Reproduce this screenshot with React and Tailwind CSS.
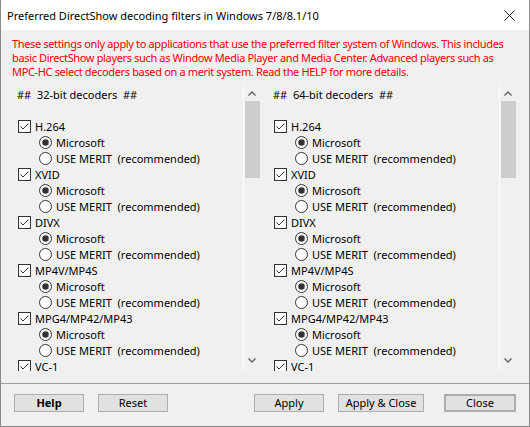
const decoders = ['H.264', 'XVID', 'DIVX', 'MP4V/MP4S', 'MPG4/MP42/MP43', 'VC-1']

const font = { fontFamily: '"Noto Sans", "Open Sans", sans-serif' }

function CheckBox() {
  return (
    <svg width="13" height="13" viewBox="0 0 13 13" className="shrink-0">
      <rect x="0.5" y="0.5" width="12" height="12" fill="#fff" stroke="#333" />
      <path d="M2.5 6.5 L5 9 L10.5 3.5" fill="none" stroke="#333" strokeWidth="1" />
    </svg>
  )
}

function Radio({ checked }) {
  return (
    <svg width="13" height="13" viewBox="0 0 13 13" className="shrink-0">
      <circle cx="6.5" cy="6.5" r="6" fill="#fff" stroke="#333" />
      {checked && <circle cx="6.5" cy="6.5" r="3.2" fill="#333" />}
    </svg>
  )
}

function Chevron({ down }) {
  return (
    <svg width="8" height="5" viewBox="0 0 8 5">
      <path
        d={down ? 'M0.5 0.5 L4 4 L7.5 0.5' : 'M0.5 4.5 L4 1 L7.5 4.5'}
        fill="none"
        stroke="#606060"
        strokeWidth="1.3"
      />
    </svg>
  )
}

function Scrollbar() {
  return (
    <div className="w-[17px] h-full border-l border-white flex flex-col items-center">
      <div className="h-[17px] flex items-center justify-center pt-[2px]">
        <Chevron />
      </div>
      <div className="w-[15px] h-[77px] bg-[#cdcdcd]" />
      <div className="flex-1" />
      <div className="h-[17px] flex items-center justify-center pb-[4px]">
        <Chevron down />
      </div>
    </div>
  )
}

function Panel({ bits }) {
  return (
    <div className="flex h-[287px]">
      <div className="w-[234px] overflow-hidden pt-[2px] pl-[8px] whitespace-nowrap">
        <div className="h-[16px] flex items-center">## &nbsp;{bits}-bit decoders &nbsp;##</div>
        <div className="h-[16px]" />
        {decoders.map((d, i) => (
          <div key={d}>
            <div className="h-[16px] flex items-center gap-[4px] pl-[1px]">
              <CheckBox />
              <span>{d}</span>
            </div>
            {i < decoders.length - 1 && (
              <>
                <div className="h-[16px] flex items-center gap-[4px] pl-[22px]">
                  <Radio checked />
                  <span>Microsoft</span>
                </div>
                <div className="h-[16px] flex items-center gap-[4px] pl-[22px]">
                  <Radio />
                  <span>USE MERIT &nbsp;(recommended)</span>
                </div>
              </>
            )}
          </div>
        ))}
      </div>
      <Scrollbar />
    </div>
  )
}

function Button({ children, className = '' }) {
  return (
    <button
      className={`h-[18px] p-0 bg-[#e1e1e1] border border-[#adadad] flex items-center justify-center text-black leading-[14px] ${className}`}
    >
      {children}
    </button>
  )
}

export default function App() {
  return (
    <div
      className="w-[530px] h-[427px] bg-[#f0f0f0] border-x border-b border-[#8a8a8a] flex flex-col text-[11px] text-black leading-none"
      style={font}
    >
      <div className="h-[30px] bg-white flex items-center justify-between pl-[6px] pr-[14px] shrink-0">
        <span className="text-[11px]">Preferred DirectShow decoding filters in Windows 7/8/8.1/10</span>
        <svg width="11" height="11" viewBox="0 0 11 11">
          <path d="M0.5 0.5 L10.5 10.5 M10.5 0.5 L0.5 10.5" stroke="#222" strokeWidth="1" />
        </svg>
      </div>

      <div className="pt-[7px] px-[11px] text-[#ff0000] leading-[14px] tracking-[-0.35px] h-[54px] shrink-0 whitespace-nowrap">
        These settings only apply to applications that use the preferred filter system of Windows. This includes
        <br />
        basic DirectShow players such as Window Media Player and Media Center. Advanced players such as
        <br />
        MPC-HC select decoders based on a merit system. Read the HELP for more details.
      </div>

      <div className="flex pl-[8px] gap-[5px] shrink-0">
        <Panel bits="32" />
        <Panel bits="64" />
      </div>

      <div className="mt-[12px] border-t border-[#a0a0a0]" />

      <div className="flex items-center pt-[10px] pl-[13px] pr-[13px]">
        <Button className="w-[70px] font-bold">Help</Button>
        <Button className="w-[70px] ml-[14px]">Reset</Button>
        <div className="flex-1" />
        <Button className="w-[70px]">Apply</Button>
        <Button className="w-[86px] ml-[14px]">Apply &amp; Close</Button>
        <Button className="w-[72px] ml-[20px] border-2 border-[#0078d7]">Close</Button>
      </div>
    </div>
  )
}
